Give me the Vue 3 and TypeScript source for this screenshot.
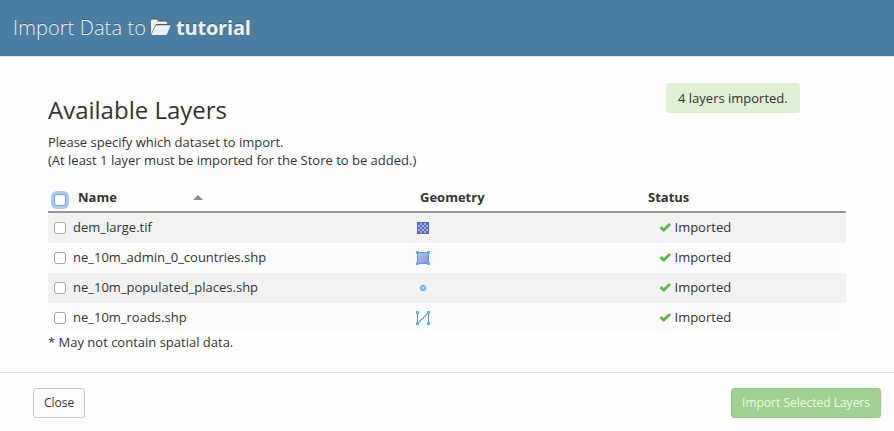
<script setup lang="ts">
type Geometry = 'raster' | 'polygon' | 'point' | 'line'

interface Layer {
  name: string
  geometry: Geometry
  status: string
}

const layers: Layer[] = [
  { name: 'dem_large.tif', geometry: 'raster', status: 'Imported' },
  { name: 'ne_10m_admin_0_countries.shp', geometry: 'polygon', status: 'Imported' },
  { name: 'ne_10m_populated_places.shp', geometry: 'point', status: 'Imported' },
  { name: 'ne_10m_roads.shp', geometry: 'line', status: 'Imported' },
]

// Light squares of the raster icon, on a 2px grid
const cells: { x: number; y: number }[] = []
for (let r = 0; r < 5; r++) {
  for (let c = 0; c < 5; c++) {
    if ((r + c) % 2 === 1) cells.push({ x: 3 + c * 2, y: 3 + r * 2 })
  }
}
</script>

<template>
  <div class="dialog">
    <header class="header">
      <h1 class="title">
        <span class="prefix">Import Data to</span>
        <svg class="folder" width="20" height="17" viewBox="0 0 20 17">
          <path d="M0 15.2V1.5Q0 .4 1.1.4H5.6Q6.7.4 6.7 1.5V2.4H14.7Q15.9 2.4 15.9 3.5V5.1H6.3Q4.8 5.1 4 6.5Z" />
          <path d="M5.9 6.2H18.9Q19.8 6.2 19.4 7.1L16 15Q15.6 16 14.5 16H1.2Q.3 16 .7 15.1L4.3 7.2Q4.8 6.2 5.9 6.2Z" />
        </svg>
        <strong>tutorial</strong>
      </h1>
    </header>

    <main class="body">
      <div class="intro">
        <div>
          <h2 class="heading">Available Layers</h2>
          <p class="text">Please specify which dataset to import.<br />(At least 1 layer must be imported for the Store to be added.)</p>
        </div>
        <div class="notice">4 layers imported.</div>
      </div>

      <div class="table">
        <div class="row head">
          <div class="name">
            <input type="checkbox" class="check focused" />
            <span class="label">Name</span>
            <i class="sort"></i>
          </div>
          <div>Geometry</div>
          <div>Status</div>
        </div>
        <div v-for="layer in layers" :key="layer.name" class="row item">
          <div class="name">
            <input type="checkbox" class="check" />
            <span>{{ layer.name }}</span>
          </div>
          <div class="geometry">
            <svg width="16" height="16" viewBox="0 0 16 16">
              <defs>
                <linearGradient id="area" x1="0" y1="0" x2="1" y2="1">
                  <stop offset="0" stop-color="#b3c4f0" />
                  <stop offset="1" stop-color="#7c98e0" />
                </linearGradient>
              </defs>
              <g v-if="layer.geometry === 'raster'" shape-rendering="crispEdges">
                <rect x="2" y="2" width="12" height="12" fill="#5b66c4" />
                <rect v-for="(cell, i) in cells" :key="i" :x="cell.x" :y="cell.y" width="2" height="2" fill="#a2b0e6" />
              </g>
              <g v-else-if="layer.geometry === 'polygon'">
                <rect x="2.5" y="2.5" width="11" height="11" fill="url(#area)" stroke="#7788d0" />
                <path class="node" d="M1 1h3v3H1zM12 1h3v3h-3zM1 12h3v3H1zM12 12h3v3h-3z" />
              </g>
              <g v-else-if="layer.geometry === 'point'">
                <circle cx="8" cy="8" r="2.6" fill="#8ed1f5" stroke="#4f9fe0" />
                <circle cx="7.5" cy="7.5" r="1" fill="#b9e4fa" />
              </g>
              <g v-else>
                <path d="M2.5 2.5V13.5L13.5 2.5V13.5" fill="none" stroke="#7085d4" stroke-width="1.1" />
                <path class="node" d="M1 1h3v3H1zM12 1h3v3h-3zM1 12h3v3H1zM12 12h3v3h-3z" />
              </g>
            </svg>
          </div>
          <div class="status">
            <svg width="12" height="10" viewBox="0 0 12 10">
              <path d="M1.5 5.1 4.8 8.1 11.1 1.9" fill="none" stroke="#62b54a" stroke-width="2.8" />
            </svg>
            <span>{{ layer.status }}</span>
          </div>
        </div>
      </div>
      <p class="text">* May not contain spatial data.</p>
    </main>

    <footer class="footer">
      <button type="button" class="btn">Close</button>
      <button type="button" class="btn primary" disabled>Import Selected Layers</button>
    </footer>
  </div>
</template>

<style>
body {
  margin: 0;
  background: #fefefd;
}
</style>

<style scoped>
.dialog {
  display: flex;
  flex-direction: column;
  box-sizing: border-box;
  height: 431px;
  overflow: hidden;
  background: #fefefd;
  color: #333;
  font: 13px/18px 'Open Sans', 'Noto Sans', sans-serif;
}
.header {
  flex: none;
  box-sizing: border-box;
  height: 57px;
  padding: 0 13px;
  background: #4a7ea1;
  border-bottom: 1px solid #e5e5e5;
}
.title {
  display: flex;
  align-items: center;
  margin: 0;
  height: 56px;
  color: #eff1ef;
  font-size: 20px;
  font-weight: 300;
  line-height: 28px;
  text-shadow: 0 -1px 0 rgba(0, 0, 0, 0.25);
}
.prefix {
  letter-spacing: 0.1px;
}
.title strong {
  font-weight: 700;
  letter-spacing: -0.2px;
}
.folder {
  margin: 0 5px 2px 5px;
  fill: #eff1ef;
  filter: drop-shadow(0 -1px 0 rgba(0, 0, 0, 0.3));
}
.body {
  flex: none;
  box-sizing: border-box;
  height: 315px;
  padding: 26px 48px 0;
}
.intro {
  display: flex;
  justify-content: space-between;
  align-items: flex-start;
  height: 101px;
}
.heading {
  margin: 13px 0 9px;
  font-size: 24px;
  font-weight: 400;
  line-height: 28px;
}
.text {
  margin: 0;
}
.notice {
  box-sizing: border-box;
  height: 30px;
  width: 134px;
  margin-right: 46px;
  padding: 6px 12px;
  border-radius: 3px;
  background: #dff0d4;
  white-space: nowrap;
}
.table {
  width: 798px;
}
.row {
  display: grid;
  grid-template-columns: 372px 228px 198px;
  align-items: center;
  box-sizing: border-box;
  height: 30px;
  padding-bottom: 2px;
}
.head {
  height: 29px;
  border-bottom: 2px solid #9b9492;
  font-weight: 700;
}
.item:nth-child(even) {
  background: #f1f3f1;
}
.item:nth-child(odd) {
  background: #fbfdfb;
}
.name {
  display: flex;
  align-items: center;
}
.check {
  appearance: none;
  box-sizing: border-box;
  width: 12px;
  height: 12px;
  margin: 1px 7px 0 6px;
  border: 1px solid #a5a5a5;
  border-radius: 3px;
  background: #fff;
}
.focused {
  margin: 6px 12px 0 6px;
  border-color: #7c9fd8;
  box-shadow: 0 0 0 3px #a6c8fb;
}
.label {
  width: 115px;
}
.sort {
  margin-top: 1px;
  border: 5px solid transparent;
  border-top: 0;
  border-bottom-color: #8a8a8a;
}
.geometry svg {
  display: block;
  margin: 1px 0 0 -5px;
}
.node {
  fill: #5bb3f0;
}
.status {
  display: flex;
  align-items: center;
  gap: 4px;
  padding-left: 10.5px;
}
.table + .text {
  margin-top: 0;
}
.footer {
  flex: 1;
  display: flex;
  justify-content: space-between;
  align-items: flex-start;
  padding: 15px 13px 0 33px;
  border-top: 1px solid #e1e1e1;
}
.btn {
  box-sizing: border-box;
  height: 30px;
  padding: 0 10px;
  border: 1px solid #c6c6c6;
  border-radius: 3px;
  background: #fefefd;
  color: #333;
  font: 12px/18px 'Open Sans', 'Noto Sans', sans-serif;
  white-space: nowrap;
}
.primary {
  border-color: #94ca84;
  background: #9fd190;
  color: #edfae8;
}
</style>
